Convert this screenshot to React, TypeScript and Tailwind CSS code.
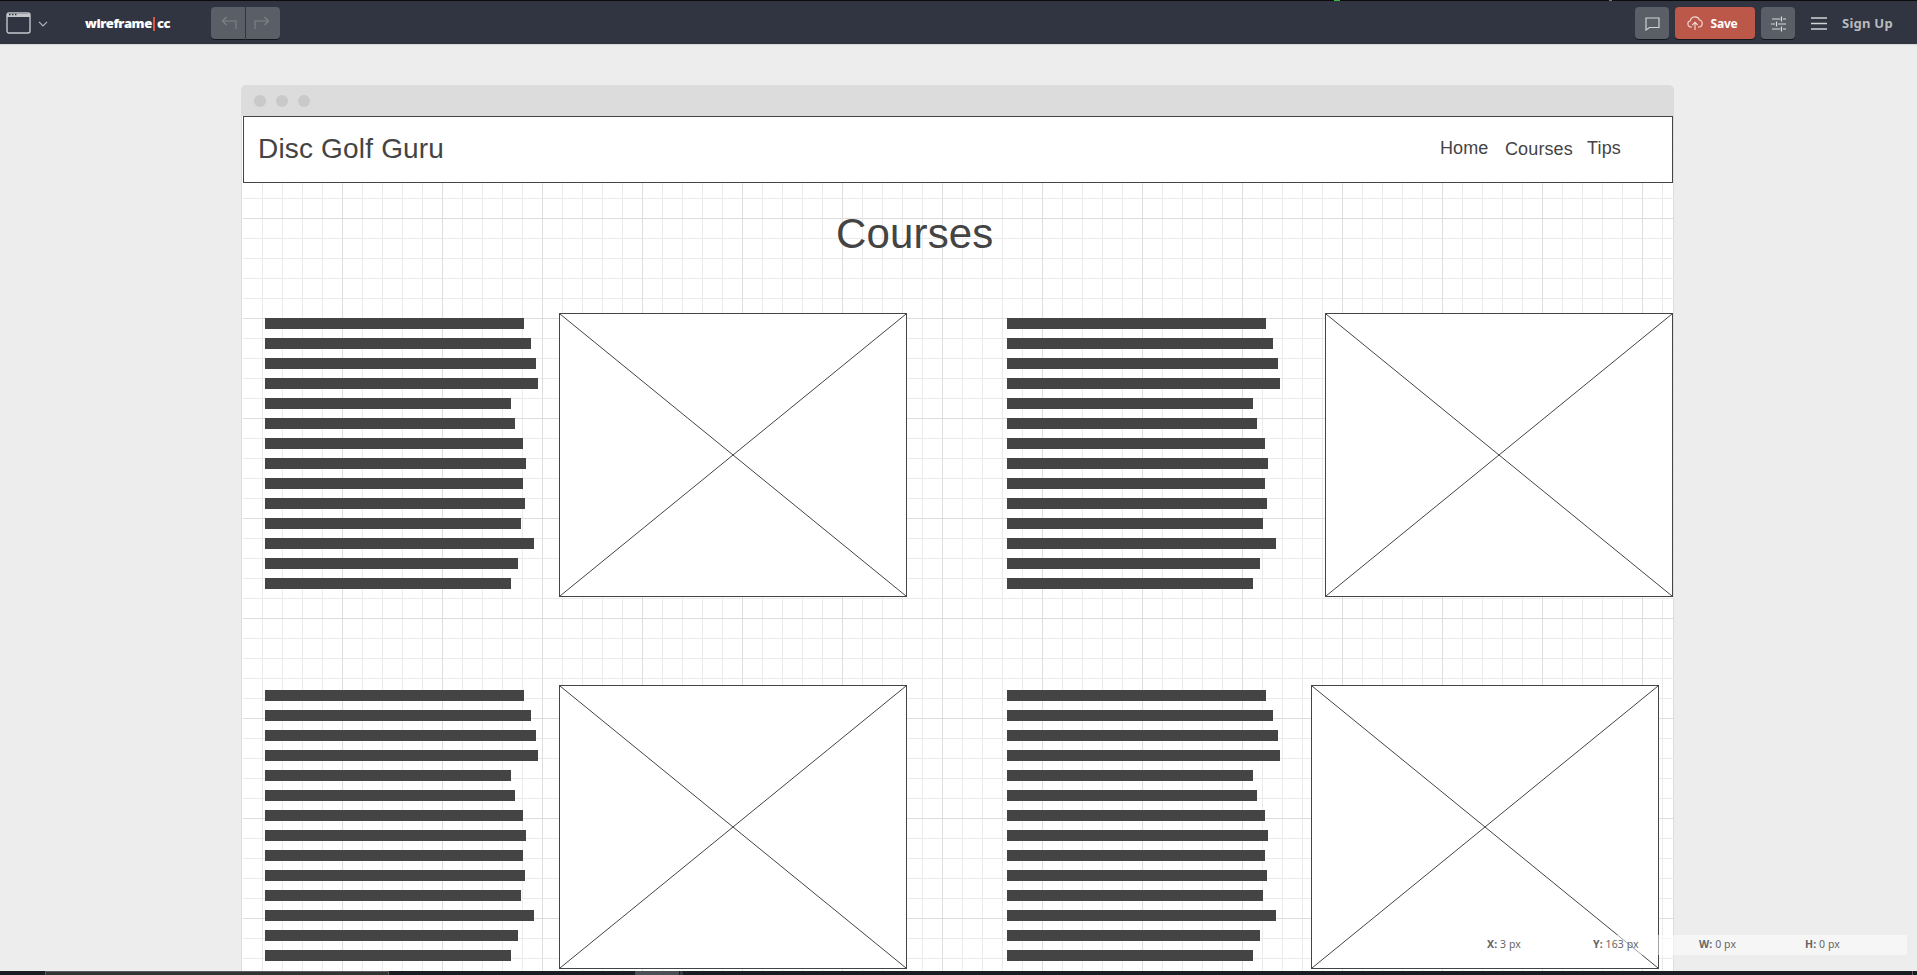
import type { ReactNode } from "react";

const lineWidths = [259, 266, 271, 273, 246, 250, 258, 261, 258, 260, 256, 269, 253, 246];

function TextLines({ className }: { className: string }) {
  return (
    <div className={"absolute flex flex-col gap-[9px] " + className}>
      {lineWidths.map((w, i) => (
        <div key={i} className="h-[11px] bg-[#444444]" style={{ width: w }} />
      ))}
    </div>
  );
}

function ImageBox({ className }: { className: string }) {
  return (
    <div className={"absolute h-[284px] w-[348px] border border-[#444444] bg-white " + className}>
      <svg className="block h-full w-full" viewBox="0 0 346 282" fill="none" stroke="#444444" strokeWidth="1">
        <path d="M0 0L346 282M346 0L0 282" />
      </svg>
    </div>
  );
}

function ToolButton({ className, children }: { className: string; children: ReactNode }) {
  return (
    <button className={"flex h-8 items-center justify-center shadow-[0_1px_0_#14171c] " + className}>
      {children}
    </button>
  );
}

function Toolbar() {
  return (
    <header className="flex h-11 shrink-0 items-start border-t border-[#0a0b0a] bg-[#303541] pt-[6px] shadow-[0_1px_1px_#d8d8d8]">
      <div className="flex h-8 w-[211px] items-center pl-[6px]">
        <svg width="25" height="22" viewBox="0 0 25 22" fill="none" className="-mt-px">
          <rect x="1" y="1" width="23" height="20" rx="2" stroke="#c4c6ca" strokeWidth="1.4" />
          <path d="M1 2h23v3H1z" fill="#c4c6ca" />
          <path d="M3 2.5h1.5M6 2.5h1.5M9 2.5h1.5" stroke="#303541" strokeWidth="1.4" />
        </svg>
        <svg width="10" height="6" viewBox="0 0 10 6" fill="none" stroke="#b4b6ba" strokeWidth="1.2" className="ml-[7px] mt-[2px]">
          <path d="M1 .8l4 4 4-4" />
        </svg>
        <div className="ml-[37px] mt-px flex h-5 items-center font-['Open_Sans',sans-serif] text-[13px] font-extrabold tracking-[-0.45px] text-white">
          <span className="w-[68px] whitespace-nowrap">wireframe</span>
          <span className="h-[14px] w-[2px] bg-[#e2553f]" />
          <span className="ml-[2px]">cc</span>
        </div>
      </div>
      <ToolButton className="w-[34px] rounded-l-[4px] bg-[#5a5e66]">
        <svg width="16" height="14" viewBox="0 0 16 14" fill="none" stroke="#7e8187" strokeWidth="1.2" className="ml-[2px]">
          <path d="M5.5 1L1.5 5l4 4M1.5 5H15v8" />
        </svg>
      </ToolButton>
      <ToolButton className="ml-px w-[34px] rounded-r-[4px] bg-[#5a5e66]">
        <svg width="16" height="14" viewBox="0 0 16 14" fill="none" stroke="#7e8187" strokeWidth="1.2" className="-ml-[2px]">
          <path d="M10.5 1l4 4-4 4M14.5 5H1v8" />
        </svg>
      </ToolButton>
      <div className="ml-auto flex h-8 w-[282px] items-center font-['Noto_Sans',sans-serif] font-bold">
        <ToolButton className="w-[34px] rounded-[4px] bg-[#5a5e66]">
          <svg width="15" height="14" viewBox="0 0 15 14" fill="none" stroke="#d0d2d4" strokeWidth="1.2" className="ml-px mt-px">
            <path d="M1 1h13v9.500H4.500L1 13z" />
          </svg>
        </ToolButton>
        <ToolButton className="ml-[6px] w-20 rounded-[4px] bg-[#bc5849] pr-[5px] text-[12px] tracking-[-0.2px] text-white">
          <svg width="16" height="14" viewBox="0 0 16 14" fill="none" stroke="#f0d9d5" strokeWidth="1.1" className="mr-[7px]">
            <path d="M5 11H3.800a3.200 3.200 0 0 1-.5-6.300A4.800 4.800 0 0 1 12.500 4a3.600 3.600 0 0 1 0 7H11M8 14V6.500M5.300 9L8 6.300 10.700 9" />
          </svg>
          <span className="mt-px">Save</span>
        </ToolButton>
        <ToolButton className="ml-[6px] w-[34px] rounded-[4px] bg-[#5a5e66]">
          <svg width="15" height="16" viewBox="0 0 15 16" fill="none" stroke="#d8dadc" strokeWidth="1.2" className="mt-px">
            <path d="M1 3h8.500M12 3h3M10.500 .5v5M0 8h4M7 8h8M5.500 5.500v5M1 13h8.500M12 13h3M10.500 10.500v5" />
          </svg>
        </ToolButton>
        <svg width="16" height="13" viewBox="0 0 16 13" fill="none" stroke="#d0d2d4" strokeWidth="1.300" className="ml-4">
          <path d="M0 1h16M0 6.500h16M0 12h16" />
        </svg>
        <span className="ml-[15px] mt-px whitespace-nowrap text-[13px] tracking-[0.25px] text-[#b9bbbe]">Sign Up</span>
      </div>
    </header>
  );
}

function GridPaper({ children }: { children: ReactNode }) {
  return (
    <div className="relative ml-px h-[855px] w-[1431px]">
      <svg className="absolute left-0 top-[3px] h-[852px] w-[1431px]">
        <defs>
          <pattern id="minor" width="20" height="20" patternUnits="userSpaceOnUse">
            <path d="M19.500 0v20M0 19.500h20" stroke="#ebebeb" fill="none" />
          </pattern>
          <pattern id="major" width="100" height="100" patternUnits="userSpaceOnUse">
            <path d="M99.500 0v100M0 99.500h100" stroke="#dedede" fill="none" />
          </pattern>
        </defs>
        <rect width="100%" height="100%" fill="url(#minor)" />
        <rect width="100%" height="100%" fill="url(#major)" />
      </svg>
      {children}
    </div>
  );
}

function Coordinates() {
  const items = [
    ["X:", "3 px"],
    ["Y:", "163 px"],
    ["W:", "0 px"],
    ["H:", "0 px"],
  ];
  return (
    <div className="absolute right-[10px] bottom-5 flex h-5 w-[430px] items-center bg-white/50 pl-[10px] font-['Noto_Sans',sans-serif] text-[10.500px] tracking-[0.1px] text-[#666666]">
      {items.map(([k, v]) => (
        <div key={k} className="w-[106px] shrink-0 whitespace-nowrap">
          <b>{k}</b> {v}
        </div>
      ))}
    </div>
  );
}

export default function App() {
  return (
    <div className="relative flex h-[975px] w-[1917px] flex-col overflow-hidden bg-[#ededed]">
      <Toolbar />
      <div className="absolute left-[1334px] top-0 h-px w-[6px] bg-[#3cb83c]" />
      <div className="absolute left-[1609px] top-0 h-px w-[3px] bg-[#77777a]" />
      <main className="flex h-[927px] shrink-0 flex-col overflow-hidden pl-[241px] pt-[41px]">
        <div className="flex h-[31px] w-[1433px] shrink-0 items-center gap-[10px] rounded-t-[5px] bg-[#dcdcdc] pl-[13px]">
          <span className="size-3 rounded-full bg-[#c9c9c9]" />
          <span className="size-3 rounded-full bg-[#c9c9c9]" />
          <span className="size-3 rounded-full bg-[#c9c9c9]" />
        </div>
        <div className="h-[855px] w-[1433px] shrink-0 border-x border-[#dedede] bg-white font-['Liberation_Sans',Arial,sans-serif] text-[#444444]">
          <GridPaper>
            <div className="absolute left-0 top-0 h-[67px] w-[1430px] border border-[#444444] bg-white" />
            <div className="absolute left-[15px] top-[17px] text-[28px] leading-8 tracking-[0.18px]">Disc Golf Guru</div>
            <div className="absolute left-[1197px] top-[21px] text-[18px] leading-[22px] tracking-[0.1px]">Home</div>
            <div className="absolute left-[1262px] top-[22px] text-[18px] leading-[22px] tracking-[0.12px]">Courses</div>
            <div className="absolute left-[1344px] top-[21px] text-[18px] leading-[22px] tracking-[0.15px]">Tips</div>
            <div className="absolute left-[593px] top-[94px] text-[42px] leading-[48px] tracking-[0.15px]">Courses</div>
            <TextLines className="left-[22px] top-[202px]" />
            <ImageBox className="left-[316px] top-[197px]" />
            <TextLines className="left-[764px] top-[202px]" />
            <ImageBox className="left-[1082px] top-[197px]" />
            <TextLines className="left-[22px] top-[574px]" />
            <ImageBox className="left-[316px] top-[569px]" />
            <TextLines className="left-[764px] top-[574px]" />
            <ImageBox className="left-[1068px] top-[569px]" />
          </GridPaper>
        </div>
      </main>
      <Coordinates />
      <footer className="flex h-1 shrink-0 bg-[#1a1e23]">
        <div className="ml-[45px] h-1 w-[344px] border border-b-0 border-[#5c5c5c] bg-[#333333]" />
        <div className="ml-[246px] h-1 w-11 bg-[#4c5054]" />
        <div className="ml-px h-1 w-[3px] bg-[#383c40]" />
        <div className="ml-auto mr-1 h-1 w-px bg-[#5c6064]" />
      </footer>
    </div>
  );
}
